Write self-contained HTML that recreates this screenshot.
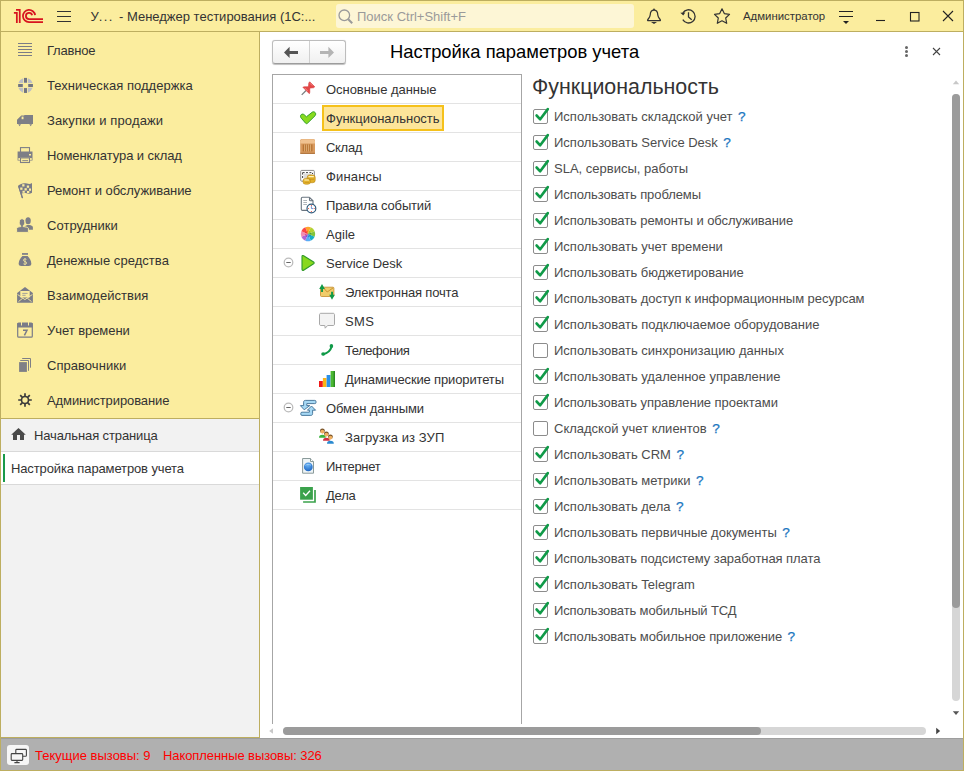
<!DOCTYPE html>
<html><head><meta charset="utf-8">
<style>
*{margin:0;padding:0;box-sizing:border-box}
html,body{width:964px;height:771px;overflow:hidden;background:#fff}
body{position:relative;font-family:"Liberation Sans",sans-serif;color:#333;font-size:13px}
.a{position:absolute}
.t{position:absolute;white-space:nowrap;line-height:16px}
#frame{left:0;top:0;width:964px;height:771px;border:1px solid #bdae60}
#hdr{left:1px;top:1px;width:962px;height:31px;background:#fbed9e;border-bottom:1px solid #bdae60}
#side{left:1px;top:32px;width:259px;height:706px;background:#f2f2f2;border-right:1px solid #bdae60;border-bottom:1px solid #bdae60}
#sideY{left:1px;top:32px;width:258px;height:387px;background:#fbed9e;border-bottom:1px solid #bdae60}
#status{left:1px;top:738px;width:962px;height:32px;background:#b0b0b0;border-top:1px solid #9e9e9e}
.mi{position:absolute;left:47px;white-space:nowrap;font-size:13px;color:#333;line-height:16px}
.li{position:absolute;white-space:nowrap;font-size:13px;color:#333;line-height:16px}
.sep{position:absolute;left:273px;width:248px;height:1px;background:#e3e3e3}
.cb{position:absolute;left:533px;width:15px;height:15px;border:1px solid #8c8c8c;border-radius:2px;background:#fff}
.cl{position:absolute;left:554px;white-space:nowrap;font-size:13px;color:#4d4d4d;line-height:16px}
.q{color:#1a76c0;margin-left:5.5px;font-size:13.6px;-webkit-text-stroke:0.25px #1a76c0;letter-spacing:0}
</style></head><body>
<div class="a" id="hdr"></div>
<div class="a" id="side"></div>
<div class="a" id="sideY"></div>
<div class="a" id="status"></div>
<div class="a" id="frame"></div>



<!-- header content -->
<div class="t" style="left:90.5px;top:9px;font-size:13px;color:#333">У<span style="letter-spacing:1.4px">...</span></div>
<div class="t" style="left:119px;top:9px;font-size:13px;color:#333">- Менеджер тестирования (1С:...</div>
<div class="a" style="left:336px;top:4px;width:298px;height:24px;background:#fdf6d6;border-radius:3px"></div>
<div class="t" style="left:357px;top:9px;font-size:13px;color:#9a9a9a">Поиск Ctrl+Shift+F</div>
<div class="t" style="left:743px;top:8px;font-size:11.4px;color:#333">Администратор</div>

<!-- sidebar menu -->
<div class="mi" style="top:43px;letter-spacing:-0.214px">Главное</div>
<div class="mi" style="top:78px;letter-spacing:0.038px">Техническая поддержка</div>
<div class="mi" style="top:113px;letter-spacing:0.141px">Закупки и продажи</div>
<div class="mi" style="top:148px;letter-spacing:-0.080px">Номенклатура и склад</div>
<div class="mi" style="top:183px;letter-spacing:-0.071px">Ремонт и обслуживание</div>
<div class="mi" style="top:218px;letter-spacing:0.050px">Сотрудники</div>
<div class="mi" style="top:253px;letter-spacing:0.053px">Денежные средства</div>
<div class="mi" style="top:288px;letter-spacing:0.043px">Взаимодействия</div>
<div class="mi" style="top:323px;letter-spacing:-0.050px">Учет времени</div>
<div class="mi" style="top:358px;letter-spacing:0.045px">Справочники</div>
<div class="mi" style="top:393px;letter-spacing:-0.094px">Администрирование</div>
<div class="mi" style="left:34px;top:428px;letter-spacing:-0.117px">Начальная страница</div>
<div class="a" style="left:1px;top:451px;width:258px;height:1px;background:#d9d9d9"></div>
<div class="a" style="left:1px;top:452px;width:258px;height:32px;background:#fff"></div>
<div class="a" style="left:3px;top:454px;width:2px;height:28px;background:#1a9a4a"></div>
<div class="mi" style="left:11px;top:461px;letter-spacing:-0.125px">Настройка параметров учета</div>
<div class="a" style="left:1px;top:484px;width:258px;height:1px;background:#d9d9d9"></div>

<!-- form title -->
<div class="a" style="left:272px;top:40px;width:74px;height:24px;border:1px solid #bdbdbd;border-bottom-color:#9c9c9c;border-radius:3px;background:linear-gradient(#fff,#f0f0f0);box-shadow:0 0.6px 0.8px rgba(0,0,0,0.25)"></div>
<div class="a" style="left:309px;top:41px;width:1px;height:22px;background:#d0d0d0"></div>
<div class="t" style="left:390px;top:41px;font-size:18.4px;line-height:22px;color:#000">Настройка параметров учета</div>

<!-- list box -->
<div class="a" style="left:272px;top:74px;width:250px;height:650px;border:1px solid #a6a6a6;border-bottom:none"></div>
<div class="a" style="left:322px;top:105px;width:122px;height:26px;background:#fde59a;border:2px solid #f5c11b"></div>
<div class="li" style="left:326px;top:82px;letter-spacing:-0.040px">Основные данные</div>
<div class="li" style="left:326px;top:111px;letter-spacing:0.000px">Функциональность</div>
<div class="li" style="left:326px;top:140px;letter-spacing:-0.300px">Склад</div>
<div class="li" style="left:326px;top:169px;letter-spacing:0.171px">Финансы</div>
<div class="li" style="left:326px;top:198px;letter-spacing:-0.167px">Правила событий</div>
<div class="li" style="left:326px;top:227px;letter-spacing:0.040px">Agile</div>
<div class="li" style="left:326px;top:256px;letter-spacing:-0.025px">Service Desk</div>
<div class="li" style="left:345px;top:285px;letter-spacing:-0.159px">Электронная почта</div>
<div class="li" style="left:345px;top:314px;letter-spacing:0.367px">SMS</div>
<div class="li" style="left:345px;top:343px;letter-spacing:-0.433px">Телефония</div>
<div class="li" style="left:345px;top:372px;letter-spacing:-0.143px">Динамические приоритеты</div>
<div class="li" style="left:326px;top:401px;letter-spacing:-0.077px">Обмен данными</div>
<div class="li" style="left:345px;top:430px;letter-spacing:0.067px">Загрузка из ЗУП</div>
<div class="li" style="left:326px;top:459px;letter-spacing:-0.288px">Интернет</div>
<div class="li" style="left:326px;top:488px;letter-spacing:-0.200px">Дела</div>
<div class="sep" style="top:103px"></div>
<div class="sep" style="top:132px"></div>
<div class="sep" style="top:161px"></div>
<div class="sep" style="top:190px"></div>
<div class="sep" style="top:219px"></div>
<div class="sep" style="top:248px"></div>
<div class="sep" style="top:277px"></div>
<div class="sep" style="top:306px"></div>
<div class="sep" style="top:335px"></div>
<div class="sep" style="top:364px"></div>
<div class="sep" style="top:393px"></div>
<div class="sep" style="top:422px"></div>
<div class="sep" style="top:451px"></div>
<div class="sep" style="top:480px"></div>
<div class="sep" style="top:509px"></div>

<!-- right panel -->
<div class="t" style="left:532px;top:75px;font-size:21.4px;line-height:24px;color:#333">Функциональность</div>
<div class="cb" style="top:109px"></div>
<svg class="a" style="left:533px;top:107px" width="17" height="17" viewBox="0 0 17 17"><path d="M3.6 8.5 L7.2 12.3 L14.8 2.1" fill="none" stroke="#109a48" stroke-width="2.6" stroke-linecap="round" stroke-linejoin="round"/></svg>
<div class="cl" style="top:109px">Использовать складской учет<span class="q">?</span></div>
<div class="cb" style="top:135px"></div>
<svg class="a" style="left:533px;top:133px" width="17" height="17" viewBox="0 0 17 17"><path d="M3.6 8.5 L7.2 12.3 L14.8 2.1" fill="none" stroke="#109a48" stroke-width="2.6" stroke-linecap="round" stroke-linejoin="round"/></svg>
<div class="cl" style="top:135px">Использовать Service Desk<span class="q">?</span></div>
<div class="cb" style="top:161px"></div>
<svg class="a" style="left:533px;top:159px" width="17" height="17" viewBox="0 0 17 17"><path d="M3.6 8.5 L7.2 12.3 L14.8 2.1" fill="none" stroke="#109a48" stroke-width="2.6" stroke-linecap="round" stroke-linejoin="round"/></svg>
<div class="cl" style="top:161px">SLA, сервисы, работы</div>
<div class="cb" style="top:187px"></div>
<svg class="a" style="left:533px;top:185px" width="17" height="17" viewBox="0 0 17 17"><path d="M3.6 8.5 L7.2 12.3 L14.8 2.1" fill="none" stroke="#109a48" stroke-width="2.6" stroke-linecap="round" stroke-linejoin="round"/></svg>
<div class="cl" style="top:187px;letter-spacing:-0.086px">Использовать проблемы</div>
<div class="cb" style="top:213px"></div>
<svg class="a" style="left:533px;top:211px" width="17" height="17" viewBox="0 0 17 17"><path d="M3.6 8.5 L7.2 12.3 L14.8 2.1" fill="none" stroke="#109a48" stroke-width="2.6" stroke-linecap="round" stroke-linejoin="round"/></svg>
<div class="cl" style="top:213px;letter-spacing:-0.074px">Использовать ремонты и обслуживание</div>
<div class="cb" style="top:239px"></div>
<svg class="a" style="left:533px;top:237px" width="17" height="17" viewBox="0 0 17 17"><path d="M3.6 8.5 L7.2 12.3 L14.8 2.1" fill="none" stroke="#109a48" stroke-width="2.6" stroke-linecap="round" stroke-linejoin="round"/></svg>
<div class="cl" style="top:239px">Использовать учет времени</div>
<div class="cb" style="top:265px"></div>
<svg class="a" style="left:533px;top:263px" width="17" height="17" viewBox="0 0 17 17"><path d="M3.6 8.5 L7.2 12.3 L14.8 2.1" fill="none" stroke="#109a48" stroke-width="2.6" stroke-linecap="round" stroke-linejoin="round"/></svg>
<div class="cl" style="top:265px;letter-spacing:-0.033px">Использовать бюджетирование</div>
<div class="cb" style="top:291px"></div>
<svg class="a" style="left:533px;top:289px" width="17" height="17" viewBox="0 0 17 17"><path d="M3.6 8.5 L7.2 12.3 L14.8 2.1" fill="none" stroke="#109a48" stroke-width="2.6" stroke-linecap="round" stroke-linejoin="round"/></svg>
<div class="cl" style="top:291px;letter-spacing:-0.040px">Использовать доступ к информационным ресурсам</div>
<div class="cb" style="top:317px"></div>
<svg class="a" style="left:533px;top:315px" width="17" height="17" viewBox="0 0 17 17"><path d="M3.6 8.5 L7.2 12.3 L14.8 2.1" fill="none" stroke="#109a48" stroke-width="2.6" stroke-linecap="round" stroke-linejoin="round"/></svg>
<div class="cl" style="top:317px">Использовать подключаемое оборудование</div>
<div class="cb" style="top:343px"></div>
<div class="cl" style="top:343px">Использовать синхронизацию данных</div>
<div class="cb" style="top:369px"></div>
<svg class="a" style="left:533px;top:367px" width="17" height="17" viewBox="0 0 17 17"><path d="M3.6 8.5 L7.2 12.3 L14.8 2.1" fill="none" stroke="#109a48" stroke-width="2.6" stroke-linecap="round" stroke-linejoin="round"/></svg>
<div class="cl" style="top:369px">Использовать удаленное управление</div>
<div class="cb" style="top:395px"></div>
<svg class="a" style="left:533px;top:393px" width="17" height="17" viewBox="0 0 17 17"><path d="M3.6 8.5 L7.2 12.3 L14.8 2.1" fill="none" stroke="#109a48" stroke-width="2.6" stroke-linecap="round" stroke-linejoin="round"/></svg>
<div class="cl" style="top:395px;letter-spacing:-0.058px">Использовать управление проектами</div>
<div class="cb" style="top:421px"></div>
<div class="cl" style="top:421px">Складской учет клиентов<span class="q">?</span></div>
<div class="cb" style="top:447px"></div>
<svg class="a" style="left:533px;top:445px" width="17" height="17" viewBox="0 0 17 17"><path d="M3.6 8.5 L7.2 12.3 L14.8 2.1" fill="none" stroke="#109a48" stroke-width="2.6" stroke-linecap="round" stroke-linejoin="round"/></svg>
<div class="cl" style="top:447px">Использовать CRM<span class="q">?</span></div>
<div class="cb" style="top:473px"></div>
<svg class="a" style="left:533px;top:471px" width="17" height="17" viewBox="0 0 17 17"><path d="M3.6 8.5 L7.2 12.3 L14.8 2.1" fill="none" stroke="#109a48" stroke-width="2.6" stroke-linecap="round" stroke-linejoin="round"/></svg>
<div class="cl" style="top:473px">Использовать метрики<span class="q">?</span></div>
<div class="cb" style="top:499px"></div>
<svg class="a" style="left:533px;top:497px" width="17" height="17" viewBox="0 0 17 17"><path d="M3.6 8.5 L7.2 12.3 L14.8 2.1" fill="none" stroke="#109a48" stroke-width="2.6" stroke-linecap="round" stroke-linejoin="round"/></svg>
<div class="cl" style="top:499px">Использовать дела<span class="q">?</span></div>
<div class="cb" style="top:525px"></div>
<svg class="a" style="left:533px;top:523px" width="17" height="17" viewBox="0 0 17 17"><path d="M3.6 8.5 L7.2 12.3 L14.8 2.1" fill="none" stroke="#109a48" stroke-width="2.6" stroke-linecap="round" stroke-linejoin="round"/></svg>
<div class="cl" style="top:525px">Использовать первичные документы<span class="q">?</span></div>
<div class="cb" style="top:551px"></div>
<svg class="a" style="left:533px;top:549px" width="17" height="17" viewBox="0 0 17 17"><path d="M3.6 8.5 L7.2 12.3 L14.8 2.1" fill="none" stroke="#109a48" stroke-width="2.6" stroke-linecap="round" stroke-linejoin="round"/></svg>
<div class="cl" style="top:551px;letter-spacing:-0.065px">Использовать подсистему заработная плата</div>
<div class="cb" style="top:577px"></div>
<svg class="a" style="left:533px;top:575px" width="17" height="17" viewBox="0 0 17 17"><path d="M3.6 8.5 L7.2 12.3 L14.8 2.1" fill="none" stroke="#109a48" stroke-width="2.6" stroke-linecap="round" stroke-linejoin="round"/></svg>
<div class="cl" style="top:577px">Использовать Telegram</div>
<div class="cb" style="top:603px"></div>
<svg class="a" style="left:533px;top:601px" width="17" height="17" viewBox="0 0 17 17"><path d="M3.6 8.5 L7.2 12.3 L14.8 2.1" fill="none" stroke="#109a48" stroke-width="2.6" stroke-linecap="round" stroke-linejoin="round"/></svg>
<div class="cl" style="top:603px;letter-spacing:-0.127px">Использовать мобильный ТСД</div>
<div class="cb" style="top:629px"></div>
<svg class="a" style="left:533px;top:627px" width="17" height="17" viewBox="0 0 17 17"><path d="M3.6 8.5 L7.2 12.3 L14.8 2.1" fill="none" stroke="#109a48" stroke-width="2.6" stroke-linecap="round" stroke-linejoin="round"/></svg>
<div class="cl" style="top:629px;letter-spacing:-0.112px">Использовать мобильное приложение<span class="q">?</span></div>

<!-- status -->
<div class="t" style="left:35px;top:748px;font-size:13px;color:#f00">Текущие вызовы: 9</div>
<div class="t" style="left:163px;top:748px;font-size:13px;color:#f00;letter-spacing:-0.08px">Накопленные вызовы: 326</div>
<svg class="a" style="left:0;top:0" width="964" height="771" viewBox="0 0 964 771">
<!-- 1C logo -->
<g fill="none" stroke="#d7141f" stroke-width="1.75">
<path d="M13.9 12.85H16.85V22.95"/>
<path d="M16 9.85H19.75V22.95"/>
<path d="M35.1 15.2A6.1 6.1 0 1 0 29 22.1H43"/>
<path d="M32.15 15.3A3.15 3.15 0 1 0 29 19.1H43"/>
</g>
<!-- hamburger -->
<g stroke="#333" stroke-width="1.2"><path d="M57 11.5H71M57 16.5H71M57 21.5H71"/></g>
<!-- search icon -->
<g fill="none" stroke="#9a9a9a" stroke-width="1.3"><circle cx="344.3" cy="15.3" r="5.3"/><path d="M348.2 19.2L352.2 23.2" stroke-width="2"/></g>
<!-- bell -->
<g fill="none" stroke="#333" stroke-width="1.25">
<path d="M654 10.2C651 10.2 650.3 12.8 650.2 15C650 17.2 648.8 18.3 647.8 19.6C647.3 20.3 647.6 20.6 648.3 20.6H659.7C660.4 20.6 660.7 20.3 660.2 19.6C659.2 18.3 658 17.2 657.8 15C657.7 12.8 657 10.2 654 10.2Z"/>
</g>
<circle cx="654" cy="9.3" r="0.9" fill="#333"/>
<path d="M651 22H657L654 23.9Z" fill="#333"/>
<!-- history -->
<g fill="none" stroke="#333" stroke-width="1.3">
<path d="M682.9 12.9A6.6 6.6 0 1 1 682.8 19.7"/>
<path d="M688.5 12.3V16.9L691.7 19.8"/>
</g>
<path d="M680.3 12.8L685.3 12.4L683.3 15.6Z" fill="#333"/>
<!-- star -->
<path d="M722 8.8L724.3 13.6L729.5 14.4L725.7 18L726.7 23.3L722 20.8L717.3 23.3L718.3 18L714.5 14.4L719.7 13.6Z" fill="none" stroke="#333" stroke-width="1.2" stroke-linejoin="round"/>
<!-- filter -->
<g stroke="#222" stroke-width="1.1"><path d="M839 11.5H853M839 16.5H853"/></g>
<path d="M843 21H849L846 23.9Z" fill="#222"/>
<!-- min max close -->
<path d="M876 20.5H885" stroke="#222" stroke-width="1.1"/>
<rect x="910.5" y="12.5" width="8.5" height="8.5" fill="none" stroke="#222" stroke-width="1.1"/>
<path d="M943 11L953 21M953 11L943 21" stroke="#222" stroke-width="1.1"/>

<!-- sidebar icons -->
<g stroke="#7a7c86" stroke-width="1.1"><path d="M18 43.5H32M18 46.5H32M18 49.5H32M18 52.5H32M18 55.5H32"/></g>
<g>
<circle cx="25.5" cy="85.4" r="7.5" fill="#bdbfc5"/>
<path d="M23.6 77.5V93.5M27.4 77.5V93.5M17.5 83.5H33.5M17.5 87.3H33.5" stroke="#fbed9e" stroke-width="0.9"/>
<rect x="23.2" y="83.2" width="4.6" height="4.4" fill="#fbed9e"/>
<g fill="#72757f"><rect x="24" y="77.9" width="3" height="4.7"/><rect x="24" y="88.1" width="3" height="4.8"/><rect x="18.2" y="84" width="4.5" height="3"/><rect x="28.3" y="84" width="4.6" height="3"/></g>
</g>
<!-- truck -->
<path d="M17 119.8L21.3 115.6H24.3V114.9H33V124H17Z" fill="#7e7f86"/>
<rect x="21.6" y="116.6" width="1.9" height="2.6" fill="#fbed9e"/>
<path d="M18.2 124.3H21L19.6 126.2Z M29.3 124.3H32.1L30.7 126.2Z" fill="#7e7f86"/>
<!-- printer -->
<g fill="none" stroke="#7e7f86" stroke-width="1.1">
<rect x="20.5" y="147.6" width="9" height="5"/>
<rect x="20.5" y="157.9" width="9" height="4.6"/>
</g>
<path d="M17.6 151.6H32.5V160.6H29.8V157.5H20.2V160.6H17.6Z" fill="#7e7f86"/>
<rect x="18.4" y="158" width="1.5" height="2" fill="#fbed9e"/><rect x="30.1" y="158" width="1.6" height="2" fill="#fbed9e"/>
<rect x="29" y="154" width="2" height="1.5" fill="#fbed9e"/>
<path d="M22.3 160.6H28" stroke="#7e7f86" stroke-width="0.9"/>
<!-- flag -->
<path d="M18.9 186.5L22.4 197.6" stroke="#7a7c88" stroke-width="1.4" stroke-linecap="round"/>
<path d="M18.2 185.8C20.5 183.4 24 182.5 27 183.6C28.8 184.2 30.4 184.3 32 182.9V192.8C30.2 194 28.5 193.9 26.5 193.3C24.8 192.8 22.5 192.9 20.8 194L22.7 197.6L21.8 198L18.2 186.5Z" fill="#7a7c88"/>
<g fill="#fbed9e"><rect x="22.2" y="184.2" width="2.3" height="2.3"/><rect x="26.8" y="185.5" width="2.3" height="2.3"/><rect x="20.2" y="187.5" width="2.3" height="2.3"/><rect x="24.5" y="188.2" width="2.3" height="2.3"/><rect x="29" y="188.5" width="2" height="2.3"/><rect x="22.5" y="190.8" width="2.3" height="2"/><rect x="27" y="191" width="2.3" height="2"/></g>
<!-- people -->
<g fill="#7e7f86">
<ellipse cx="28.1" cy="220.7" rx="2.7" ry="3.5"/>
<path d="M24.5 227C25.5 225.4 26.8 225 28.5 225C30.2 225 31.5 225.4 32.4 226.2C32.8 226.6 32.9 227 32.9 227.5V229.8H24.5Z"/>
</g>
<g fill="#7e7f86" stroke="#fbed9e" stroke-width="1">
<path d="M22 218.7C20.4 218.7 19.2 220 19.2 222.2C19.2 224 20 225.2 20.8 225.8V226.6C19 226.8 17.1 227.2 16.6 228.2V232.4H28.4V228.2C27.9 227.2 25 226.8 23.2 226.6V225.8C24 225.2 24.8 224 24.8 222.2C24.8 220 23.6 218.7 22 218.7Z"/>
</g>
<!-- money bag -->
<rect x="22" y="253.1" width="6" height="1.7" fill="#7a7c88"/>
<path d="M22.4 256H27.6C29.2 257.6 31.3 260.5 31.3 263.5C31.3 265.3 30.3 266 28.8 266H21.2C19.7 266 18.7 265.3 18.7 263.5C18.7 260.5 20.8 257.6 22.4 256Z" fill="#7a7c88"/>
<path d="M26.4 259.4C25.4 258.6 23.4 258.8 23.4 260.2C23.4 261.8 26.6 261.2 26.6 263C26.6 264.5 24.4 264.6 23.4 263.8M25 258.2V265.2" fill="none" stroke="#fbed9e" stroke-width="0.8"/>
<!-- envelope -->
<path d="M17.1 293L25 287L32.9 293V302.8H17.1Z" fill="#7a7c88"/>
<rect x="20.3" y="291" width="9.4" height="6.5" fill="#fbed9e"/>
<path d="M22.3 293.4H27.6M22.3 295.3H25.6" stroke="#9a9a98" stroke-width="0.9"/>
<path d="M17.6 294.5L24.9 299.6L32.4 294.5M18.5 301.6L22.7 298.2M31.5 301.6L27.3 298.2" fill="none" stroke="#fbed9e" stroke-width="0.9"/>
<!-- calendar -->
<rect x="17.7" y="323.2" width="14.6" height="14" rx="1" fill="none" stroke="#7a7c88" stroke-width="1.2"/>
<rect x="17.3" y="323" width="15.4" height="4.5" fill="#7a7c88"/>
<path d="M21.5 322V325.5M28.5 322V325.5" stroke="#fbed9e" stroke-width="1"/>
<path d="M23 330.3H27L24.4 335.4" fill="none" stroke="#7a7c88" stroke-width="1.5"/>
<!-- books -->
<rect x="19.1" y="362.1" width="7.8" height="9.8" fill="#7e7f86"/>
<path d="M20.2 360.5H28.5V370.8M22.2 358.5H30.5V367.7" fill="none" stroke="#7e7f86" stroke-width="1"/>
<!-- gear -->
<g stroke="#3b3b3b">
<circle cx="25" cy="400" r="3.5" fill="none" stroke-width="1.6"/>
<path d="M25 393.3V396.3M25 403.7V406.8M18.2 400H21.3M28.7 400H31.8M20.2 395.2L22.4 397.4M27.6 402.6L29.8 404.8M29.8 395.2L27.6 397.4M22.4 402.6L20.2 404.8" stroke-width="1.7"/>
</g>
<!-- home -->
<path d="M18.5 427.9L25.8 434.8H24V440H20V435H17V440H13V434.8H11.2Z" fill="#4a4a4a"/>
<!-- monitor icon status -->
<rect x="7" y="745" width="22" height="20" rx="3" fill="#f6f6f6"/>
<g fill="none" stroke="#444" stroke-width="1.1">
<rect x="15.8" y="749.4" width="10.6" height="6.8" rx="0.8"/>
<rect x="11.2" y="753.6" width="11.5" height="6.8" rx="0.8" fill="#f6f6f6"/>
<path d="M17 760.5V762.3M14.4 762.6H19.6"/>
</g>

<!-- nav arrows -->
<path d="M284 52.4L289.6 46.8V50.9H298V54H289.6V58Z" fill="#555"/>
<path d="M334 52.4L328.4 46.8V50.9H320V54H328.4V58Z" fill="#b4b4b4"/>
<!-- kebab & close -->
<g fill="#666"><circle cx="906.5" cy="47.6" r="1.5"/><circle cx="906.5" cy="51.6" r="1.5"/><circle cx="906.5" cy="55.6" r="1.5"/></g>
<path d="M933 48L940 55M940 48L933 55" stroke="#444" stroke-width="1.1"/>
<!-- v scrollbar -->
<path d="M952.8 84.2L956 80.4L959.2 84.2Z" fill="#c8c8c8"/>
<rect x="952" y="94" width="8" height="607" rx="4" fill="#d6d6d6"/>
<rect x="952" y="94" width="8" height="514" rx="4" fill="#9b9b9b"/>
<path d="M952.8 711.2H959.2L956 714.9Z" fill="#555"/>
<!-- h scrollbar -->
<path d="M273 728.2V733.8L269.2 731Z" fill="#c8c8c8"/>
<rect x="283" y="727" width="643" height="8" rx="4" fill="#d6d6d6"/>
<rect x="283" y="727" width="478" height="8" rx="4" fill="#9b9b9b"/>
<path d="M936.2 727.8V734.2L940.2 731Z" fill="#444"/>

<!-- list icons -->
<!-- pin -->
<g transform="translate(309.2 87.35) rotate(-45)">
<path d="M-4.4 0H-10.6" stroke="#7a7f80" stroke-width="1.3"/>
<path d="M4.3 -3.6V3.6L2.8 3.4L0.4 1.4H-0.6L-3 3.9L-4.4 4.6V-4.6L-3 -3.9L-0.6 -1.4H0.4L2.8 -3.4Z" fill="#e44848" stroke="#d23434" stroke-width="0.5"/>
<path d="M-3.6 -2.8V1.5M3.4 -2.4V1" stroke="#f48484" stroke-width="0.9"/>
</g>
<!-- check -->
<path d="M306.4 116.8L304.3 114.8C303.1 113.7 301.3 113.9 300.7 115.3C300.3 116.3 300.5 117.3 301.3 118.2L305.6 123.2C306.1 123.8 306.9 123.8 307.4 123.3L315 115.8C315.9 115 315.9 113.3 315.1 112.5C314.3 111.7 313.1 111.5 312.1 112.3Z" fill="#88da1e" stroke="#34a02c" stroke-width="1"/>
<!-- sklad box -->
<rect x="300.2" y="139" width="14.8" height="14.8" rx="1.5" fill="#d89a5e"/>
<path d="M301.5 139.2H313.8L315 141V143.6H300.2V141Z" fill="#f0c290"/>
<rect x="302.7" y="144.4" width="9.8" height="7" fill="#b87434"/>
<g stroke="#e2b27c" stroke-width="0.9"><path d="M304.6 144.4V151.4M306.6 144.4V151.4M308.6 144.4V151.4M310.6 144.4V151.4"/></g>
<path d="M300.2 153.3H315" stroke="#a86a30" stroke-width="1"/>
<!-- finance -->
<rect x="300.7" y="170.4" width="13.6" height="10.8" rx="1" fill="#fff" stroke="#8a8a8a" stroke-width="1"/>
<path d="M302.6 172.6V179M302.6 172.6H312.5V174" fill="none" stroke="#444" stroke-width="1" stroke-dasharray="2 1.4"/>
<rect x="303.5" y="173.5" width="8" height="5" fill="#dcdcdc"/>
<g stroke="#b88410" stroke-width="0.6">
<rect x="307.2" y="174.9" width="8" height="7.8" rx="2.5" fill="#e2b02a"/>
<rect x="303" y="178.4" width="7.4" height="5.8" rx="2.5" fill="#e8b82e"/>
</g>
<path d="M308.5 176.6H313.8M304.4 180H309" stroke="#fff4c0" stroke-width="1.2"/>
<path d="M308.8 179.2H314M304.5 182.3H309.2" stroke="#c08a18" stroke-width="0.7"/>
<!-- events doc -->
<path d="M309.5 197.3H302.5C301.7 197.3 301.3 197.7 301.3 198.5V209.2C301.3 210 301.7 210.4 302.5 210.4H307M309.5 197.3L313 200.8V204.3M309.5 197.3V199.8C309.5 200.4 309.9 200.8 310.5 200.8H313" fill="#fff" stroke="#6a7580" stroke-width="1.1"/>
<path d="M303.3 200.5H307M303.3 202.5H307M303.3 204.5H307" stroke="#9aa3aa" stroke-width="0.8"/>
<circle cx="311.4" cy="208.5" r="4.4" fill="#fff" stroke="#2f5a7c" stroke-width="1.2"/>
<path d="M311.4 206.2V208.6H313.3" fill="none" stroke="#4a78c8" stroke-width="0.8"/>
<g fill="#e84a3a"><circle cx="311.4" cy="205.6" r="0.6"/><circle cx="311.4" cy="211.5" r="0.6"/><circle cx="308.5" cy="208.5" r="0.6"/><circle cx="314.3" cy="208.5" r="0.6"/></g>
<!-- agile flower -->
<path d="M308 234L305.24 227.35A7.2 7.2 0 0 1 310.76 227.35Z" fill="#ffa52c"/>
<path d="M308 234L310.76 227.35A7.2 7.2 0 0 1 314.65 231.24Z" fill="#b2d230"/>
<path d="M308 234L314.65 231.24A7.2 7.2 0 0 1 314.65 236.76Z" fill="#82c43c"/>
<path d="M308 234L314.65 236.76A7.2 7.2 0 0 1 310.76 240.65Z" fill="#16aec4"/>
<path d="M308 234L310.76 240.65A7.2 7.2 0 0 1 305.24 240.65Z" fill="#58acf6"/>
<path d="M308 234L305.24 240.65A7.2 7.2 0 0 1 301.35 236.76Z" fill="#b064d4"/>
<path d="M308 234L301.35 236.76A7.2 7.2 0 0 1 301.35 231.24Z" fill="#f48cb0"/>
<path d="M308 234L301.35 231.24A7.2 7.2 0 0 1 305.24 227.35Z" fill="#fa4646"/>
<path d="M308 234L306.78 231.04L308.00 230.80Z" fill="#f07010" opacity="0.7"/>
<path d="M308 234L309.22 231.04L310.26 231.74Z" fill="#90b020" opacity="0.7"/>
<path d="M308 234L310.96 232.78L311.20 234.00Z" fill="#2a8a48" opacity="0.7"/>
<path d="M308 234L310.96 235.22L310.26 236.26Z" fill="#1080a8" opacity="0.7"/>
<path d="M308 234L309.22 236.96L308.00 237.20Z" fill="#2068c8" opacity="0.7"/>
<path d="M308 234L306.78 236.96L305.74 236.26Z" fill="#8030a0" opacity="0.7"/>
<path d="M308 234L305.04 235.22L304.80 234.00Z" fill="#d83070" opacity="0.7"/>
<path d="M308 234L305.04 232.78L305.74 231.74Z" fill="#e02828" opacity="0.7"/>
<!-- collapse circles -->
<g fill="none" stroke="#bbbbbb" stroke-width="1.25"><circle cx="288.5" cy="262.5" r="4.3"/><circle cx="288.5" cy="407.5" r="4.3"/></g>
<path d="M286.3 262.5H290.7M286.3 407.5H290.7" stroke="#666" stroke-width="1.1"/>
<!-- play -->
<path d="M302 256.6C302 255.6 302.8 255.2 303.6 255.7L313.6 262C314.3 262.5 314.3 263.3 313.6 263.8L303.6 270.2C302.8 270.7 302 270.2 302 269.2Z" fill="#88d81e" stroke="#2f9a2a" stroke-width="1.1"/>
<!-- email -->
<rect x="320.5" y="287.2" width="13.4" height="9.3" rx="1" fill="#f0cc6a" stroke="#c48c2c" stroke-width="0.8"/>
<path d="M324 288.5L327.2 292L333.2 287.8" fill="none" stroke="#c48c2c" stroke-width="0.9"/>
<path d="M319.2 289L322 284L324.9 289H323V292H321.1V289Z" fill="#109a48"/>
<path d="M329.2 294.8H331.1V291.8H333V294.8H334.8L332 299.8Z" fill="#109a48"/>
<!-- sms -->
<path d="M321 313.3H333C334 313.3 334.5 313.8 334.5 314.8V324C334.5 325 334 325.5 333 325.5H327.6L325.2 328.2L324.8 325.5H321C320 325.5 319.5 325 319.5 324V314.8C319.5 313.8 320 313.3 321 313.3Z" fill="#f3f3f3" stroke="#a8a8a8" stroke-width="1"/>
<!-- phone -->
<g fill="#109a48">
<path d="M331.6 346.8C330.6 350 327.4 353.4 323.4 354.2" fill="none" stroke="#109a48" stroke-width="2.1" stroke-linecap="round"/>
<ellipse cx="331.4" cy="346" rx="1.8" ry="1.9"/>
<ellipse cx="323.2" cy="354" rx="2" ry="1.7"/>
</g>
<!-- chart -->
<rect x="319" y="381" width="3.8" height="6" fill="#f01818"/>
<rect x="322.9" y="378" width="3.6" height="9" fill="#fbb414"/>
<rect x="326.6" y="375" width="3.9" height="12" fill="#2a90e8"/>
<rect x="330.6" y="371" width="4.4" height="16" fill="#4cb832"/>
<rect x="333.6" y="371" width="1.4" height="16" fill="#2a8a22"/>
<!-- exchange -->
<g fill="#a6d8f4" stroke="#3c6e94" stroke-width="0.9" stroke-linejoin="round">
<path d="M304.2 409.8L300.4 405.6H303.6V402.2C303.6 401 304.2 400.4 305.4 400.4H314.8C315.6 400.4 316 400.8 316 401.6V402.5C316 403.2 315.6 403.6 314.8 403.6H306.8V405.6H309.8Z"/>
<path d="M311.5 406L315.6 410.2H312.6V413.6C312.6 414.8 312 415.4 310.8 415.4H302C301.2 415.4 300.8 415 300.8 414.2V413.3C300.8 412.6 301.2 412.2 302 412.2H309.4V410.2H307.4Z"/>
</g>
<!-- zup people -->
<g>
<circle cx="322.4" cy="430.8" r="2.4" fill="#7a5428"/><circle cx="322.4" cy="431.6" r="1.9" fill="#f0b060"/>
<path d="M319 437.8C319 435.6 320.2 434.8 322.4 434.8C324.6 434.8 325.8 435.6 325.8 437.8Z" fill="#3cb43c"/>
<circle cx="326.4" cy="433.8" r="2.4" fill="#7a5428"/><circle cx="326.4" cy="434.6" r="1.9" fill="#f0b060"/>
<path d="M323 440.8C323 438.6 324.2 437.8 326.4 437.8C328.6 437.8 329.8 438.6 329.8 440.8Z" fill="#d03040"/>
<circle cx="330.4" cy="436.8" r="2.4" fill="#7a5428"/><circle cx="330.4" cy="437.6" r="1.9" fill="#f0b060"/>
<path d="M327 443.8C327 441.6 328.2 440.8 330.4 440.8C332.6 440.8 333.8 441.6 333.8 443.8Z" fill="#2a8ad0"/>
</g>
<!-- internet doc -->
<path d="M302.6 458.5H310.5L313.5 461.5V473.2H302.6Z" fill="#eef4f6" stroke="#8a9a9a" stroke-width="1"/>
<path d="M310.5 458.5V461.5H313.5" fill="#fff" stroke="#8a9a9a" stroke-width="1"/>
<defs><radialGradient id="gl" cx="0.45" cy="0.3" r="0.7"><stop offset="0" stop-color="#6ab4f4"/><stop offset="1" stop-color="#1e66c4"/></radialGradient></defs><circle cx="308.3" cy="466.9" r="4.4" fill="url(#gl)"/>
<path d="M305.4 465.3C306.8 464.2 309.4 464.2 311 465.2" stroke="#a8d4f8" stroke-width="0.8" fill="none"/>
<!-- dela -->
<rect x="300.1" y="487" width="12.8" height="12.7" fill="#3ba24c"/>
<path d="M315 490V502H303.1" fill="none" stroke="#3ba24c" stroke-width="1.7"/>
<path d="M303.2 492.8L305.7 495.5L310 490.8" fill="none" stroke="#fff" stroke-width="1.3"/>
</svg>
</body></html>
